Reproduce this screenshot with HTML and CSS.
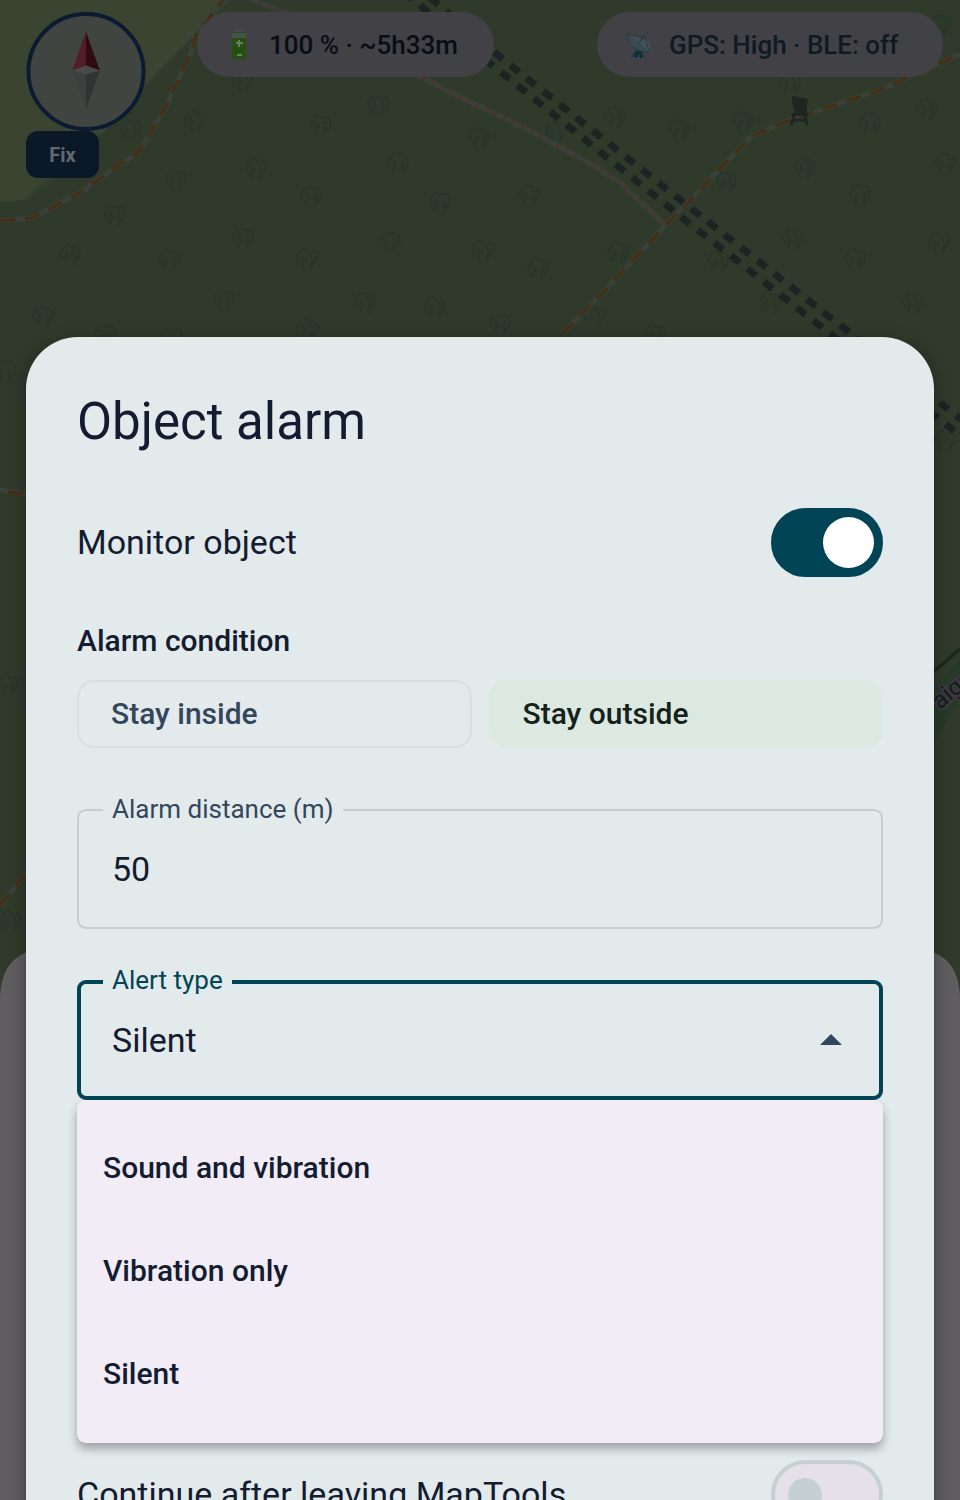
FILE: index.html
```html
<!DOCTYPE html>
<html lang="en">
<head>
    <meta charset="UTF-8">
    <meta name="viewport" content="width=device-width, initial-scale=1.0">
    <title>Object alarm</title>
    <link rel="stylesheet" href="styles.css">
</head>
<body>
    <div class="screen">
        <!-- Map -->
        <svg class="map" viewBox="0 0 960 1500" preserveAspectRatio="xMidYMin slice" aria-hidden="true">
            <defs>
                <g id="tree" fill="none" stroke="#29362c" stroke-width="2">
                    <path d="M-7 4c-4-1-4-7 0-8 0-5 7-6 9-2 5-3 9 2 7 6 2 4-2 6-5 4M-3-2c-3 3 0 6 3 5M3-3c3 2 3 5 0 7M-4 4v7M-7 6l3 3M4 3v9M8 4l-3 5"/>
                </g>
            </defs>
            <rect width="960" height="1500" fill="#2f3a2b"/>
            <path d="M0 0H232L170 60 120 118 50 184 24 201H0z" fill="#323f2e"/>
            <path d="M0 0H228L190 40 147 82 105 130 40 184 24 200 0 202z" fill="#3a4430"/>
            <path d="M960 660C930 690 920 700 900 760V800L960 700z" fill="#273a29"/>

            <g>
                <use href="#tree" x="130" y="128"/><use href="#tree" x="195" y="120"/><use href="#tree" x="321" y="124"/>
                <use href="#tree" x="256" y="167"/><use href="#tree" x="176" y="179"/><use href="#tree" x="311" y="195"/>
                <use href="#tree" x="115" y="214"/><use href="#tree" x="243" y="237"/><use href="#tree" x="70" y="254"/>
                <use href="#tree" x="169" y="259"/><use href="#tree" x="307" y="257"/><use href="#tree" x="224" y="299"/>
                <use href="#tree" x="43" y="315"/><use href="#tree" x="105" y="333"/><use href="#tree" x="172" y="337"/>
                <use href="#tree" x="307" y="328"/><use href="#tree" x="378" y="104"/><use href="#tree" x="398" y="162"/>
                <use href="#tree" x="479" y="136"/><use href="#tree" x="440" y="201"/><use href="#tree" x="529" y="194"/>
                <use href="#tree" x="390" y="241"/><use href="#tree" x="483" y="249"/><use href="#tree" x="538" y="268"/>
                <use href="#tree" x="365" y="302"/><use href="#tree" x="435" y="306"/><use href="#tree" x="500" y="323"/>
                <use href="#tree" x="615" y="116"/><use href="#tree" x="679" y="128"/><use href="#tree" x="743" y="120"/>
                <use href="#tree" x="870" y="122"/><use href="#tree" x="927" y="108"/><use href="#tree" x="556" y="131"/>
                <use href="#tree" x="804" y="167"/><use href="#tree" x="860" y="194"/><use href="#tree" x="945" y="162"/>
                <use href="#tree" x="618" y="252"/><use href="#tree" x="718" y="260"/><use href="#tree" x="793" y="238"/>
                <use href="#tree" x="855" y="258"/><use href="#tree" x="939" y="241"/><use href="#tree" x="770" y="302"/>
                <use href="#tree" x="913" y="302"/><use href="#tree" x="594" y="315"/><use href="#tree" x="655" y="333"/>
                <use href="#tree" x="243" y="80"/><use href="#tree" x="5" y="370"/><use href="#tree" x="8" y="684"/>
                <use href="#tree" x="945" y="440"/><use href="#tree" x="790" y="82"/><use href="#tree" x="940" y="24"/>
                <use href="#tree" x="726" y="180"/><use href="#tree" x="10" y="920"/>
            </g>

            <!-- Paths and tracks -->
            <g fill="none" stroke="#384038" stroke-width="5">
                <path d="M228 -6L214 12 196 36 192 50 165 108 146 140 139 152 118 165 86 189 32 218 0 221"/>
                <path d="M240 -4C350 32 430 84 470 102 540 134 600 168 620 183L665 225"/>
                <path d="M562 334L610 285 662 229 752 136 790 120 880 90 960 54"/>
                <path d="M0 490L26 494M0 906L26 873"/>
            </g>
            <g fill="none" stroke="#452e12" stroke-width="3" stroke-dasharray="15 10">
                <path d="M228 -6L214 12 196 36 192 50 165 108 146 140 139 152 118 165 86 189 32 218 0 221"/>
                <path d="M562 334L610 285 662 229 752 136 790 120 880 90 960 54"/>
                <path d="M8 492L26 494M0 906L26 873"/>
            </g>
            <path d="M240 -4C350 32 430 84 470 102 540 134 600 168 620 183L665 225" fill="none" stroke="#512f30" stroke-width="3" stroke-dasharray="3 7"/>
            <g fill="none" stroke="#1b2422" stroke-width="7" stroke-dasharray="11 10">
                <path d="M404 -8L492 65 680 216 856 354 966 440"/>
                <path d="M414 -16L500 57 688 206 864 344 970 426"/>
            </g>

            <!-- Lookout tower -->
            <g fill="#1d2623">
                <path d="M792 96l16 3-1 5h-15zM793 104h14v8l2 2-1 2h-17l1-3h2z"/>
                <path d="M794 116l-3 9M805 116l2 9M793 120h14" fill="none" stroke="#1d2623" stroke-width="3"/>
            </g>
            <path d="M930 675L960 649" stroke="#182a1a" stroke-width="3"/>
            <text class="road-name" x="940" y="710" transform="rotate(-40 940 710)">aigs</text>
            <path d="M0 1500V1000Q0 948 52 948H908Q960 948 960 1000V1500z" fill="#605d61"/>
        </svg>

        <!-- Status bar -->
        <header class="status">
            <div class="compass-box">
                <svg class="compass" viewBox="0 0 120 120" role="img" aria-label="Compass">
                    <circle cx="60" cy="60" r="58" fill="#414542" stroke="#0c1b31" stroke-width="4"/>
                    <path d="M60 20L46 59 60 54z" fill="#521d24"/>
                    <path d="M60 20L74 59 60 54z" fill="#300b10"/>
                    <path d="M46 59L60 54 74 59 60 63z" fill="#464b49"/>
                    <path d="M46 59L60 63V98z" fill="#3c413f"/>
                    <path d="M74 59L60 63V98z" fill="#303533"/>
                </svg>
                <button type="button" class="fix">Fix</button>
            </div>
            <div class="pill pill-battery">
                <svg class="pill-icon" viewBox="0 0 26 30" aria-hidden="true">
                    <rect x="9" y="0" width="8" height="4" fill="#4a4b50"/>
                    <rect x="6" y="2" width="14" height="27" rx="3" fill="#26500f"/>
                    <path d="M6 3h14v5H6z" fill="#45514a"/>
                    <path d="M13 10v7M10 13h7M11 25h5" fill="none" stroke="#6b7969" stroke-width="2"/>
                </svg>
                <span>100 % · ~5h33m</span>
            </div>
            <div class="pill pill-gps">
                <svg class="pill-icon" viewBox="0 0 26 30" aria-hidden="true">
                    <path d="M1 4C1 14 9 22 23 22z" fill="#394b53" stroke="#243a43" stroke-width="1"/>
                    <path d="M1 4L23 22C27 12 20 8 14 9z" fill="#43525a"/>
                    <path d="M2 4L19 7 23 21M12 13L22 2M12 13l7-6" fill="none" stroke="#263a43" stroke-width="1"/>
                    <path d="M10 20L5 27h14l-4-6z" fill="#183b49"/>
                    <path d="M10 28v-5h5v5" fill="none" stroke="#102c39" stroke-width="2"/>
                </svg>
                <span>GPS: High · BLE: off</span>
            </div>
        </header>

        <!-- Object alarm dialog -->
        <main class="dialog">
            <h1 class="title">Object alarm</h1>

            <div class="row">
                <label for="monitor">Monitor object</label>
                <input type="checkbox" role="switch" id="monitor" class="switch" checked>
            </div>

            <h2 class="subtitle">Alarm condition</h2>
            <div class="chips">
                <button type="button" class="chip" aria-pressed="false">Stay inside</button>
                <button type="button" class="chip chip-selected" aria-pressed="true">Stay outside</button>
            </div>

            <div class="field">
                <label for="distance">Alarm distance (m)</label>
                <input type="text" inputmode="numeric" id="distance" value="50">
            </div>

            <div class="field field-active">
                <label for="alert-type">Alert type</label>
                <select id="alert-type">
                    <option>Sound and vibration</option>
                    <option>Vibration only</option>
                    <option selected>Silent</option>
                </select>
                <svg class="arrow" viewBox="0 0 22 11" aria-hidden="true"><path d="M0 11L11 0 22 11z" fill="#33475c"/></svg>
            </div>
            <div class="menu">
                <button type="button">Sound and vibration</button>
                <button type="button">Vibration only</button>
                <button type="button">Silent</button>
            </div>

            <div class="row">
                <label for="continue">Continue after leaving MapTools</label>
                <input type="checkbox" role="switch" id="continue" class="switch">
            </div>
        </main>
    </div>
</body>
</html>
```
FILE: styles.css
```css
* {
    box-sizing: border-box;
}

body {
    margin: 0;
    font-family: Roboto, "Noto Sans", sans-serif;
    color: #131c30;
    background: #2f3a2b;
}

button,
input,
select {
    font-family: inherit;
    color: inherit;
}

button {
    cursor: pointer;
}

.screen {
    position: relative;
    height: 100vh;
    overflow: hidden;
}

.map {
    position: absolute;
    top: 0;
    left: 0;
    width: 100%;
    height: 100%;
}

.road-name {
    font-size: 24px;
    fill: #161b1b;
    stroke: #3b393e;
    stroke-width: 4px;
    paint-order: stroke;
}

/* Status bar */
.status {
    position: relative;
    display: flex;
    align-items: flex-start;
    height: 337px;
    padding: 12px 17px 0 26px;
}

.compass-box {
    display: flex;
    flex-direction: column;
    align-items: flex-start;
    margin-right: 51px;
}

.compass {
    display: block;
    width: 120px;
    height: 119px;
}

.fix {
    width: 73px;
    height: 47px;
    padding: 0;
    border: none;
    border-radius: 12px;
    background: #0a1828;
    color: #63686e;
    font-size: 20px;
    font-weight: 700;
}

.pill {
    display: flex;
    align-items: center;
    gap: 17px;
    height: 65px;
    padding: 0 26px 0 29px;
    border-radius: 33px;
    background: #424145;
    color: #090d15;
    font-size: 26px;
    font-weight: 500;
}

.pill-battery {
    min-width: 297px;
}

.pill-gps {
    min-width: 346px;
    margin-left: auto;
    color: #101a23;
}

.pill-icon {
    width: 26px;
    height: 30px;
}

/* Dialog */
.dialog {
    position: relative;
    margin: 0 26px;
    padding: 51px;
    border-radius: 52px 52px 0 0;
    background: #e3eaec;
    box-shadow: 0 4px 16px rgba(0, 0, 0, 0.35);
}

.title {
    margin: 0 0 52px;
    font-size: 51px;
    font-weight: 400;
    line-height: 68px;
}

.row {
    display: flex;
    justify-content: space-between;
    align-items: center;
    font-size: 34px;
    line-height: 66px;
}

.row label {
    padding-bottom: 2px;
}

.switch {
    appearance: none;
    display: flex;
    align-items: center;
    width: 112px;
    height: 69px;
    margin: 0;
    padding: 0 13px;
    border: 4px solid #c5d0d3;
    border-radius: 35px;
    background: #e6e0e8;
}

.switch::before {
    content: "";
    width: 34px;
    height: 34px;
    border-radius: 50%;
    background: #c5d0d5;
}

.switch:checked {
    justify-content: flex-end;
    padding: 0 5px;
    border-color: #004455;
    background: #004455;
}

.switch:checked::before {
    width: 51px;
    height: 51px;
    background: #fff;
}

.subtitle {
    margin: 42px 0 18px;
    font-size: 30px;
    font-weight: 500;
    line-height: 43px;
}

.chips {
    display: grid;
    grid-template-columns: 1fr 1fr;
    gap: 17px;
}

.chip {
    height: 68px;
    padding: 0 32px 2px;
    border: 2px solid #d9dfe2;
    border-radius: 17px;
    background: none;
    color: #33475c;
    font-size: 30px;
    font-weight: 500;
    text-align: left;
}

.chip-selected {
    border-color: #dce9e0;
    background: #dce9e0;
    color: #15221b;
}

/* Outlined fields */
.field {
    position: relative;
    margin-top: 61px;
}

.field label {
    position: absolute;
    top: -15px;
    left: 26px;
    padding: 0 9px;
    background: #e3eaec;
    color: #33475c;
    font-size: 26px;
    line-height: 30px;
}

.field input,
.field select {
    appearance: none;
    display: block;
    width: 100%;
    height: 120px;
    padding: 0 33px;
    border: 2px solid #c5ced1;
    border-radius: 9px;
    outline: none;
    background: none;
    font-size: 34px;
}

.field-active {
    margin-top: 51px;
}

.field-active label {
    color: #004455;
}

.field-active select {
    padding: 0 31px;
    border: 4px solid #004455;
}

.arrow {
    position: absolute;
    top: 54px;
    right: 41px;
    width: 22px;
    height: 11px;
}

.menu {
    display: flex;
    flex-direction: column;
    margin-bottom: 17px;
    padding: 17px 0;
    border-radius: 9px;
    background: #f2ecf7;
    box-shadow: 0 6px 10px rgba(0, 0, 0, 0.3);
}

.menu button {
    height: 103px;
    padding: 0 26px 2px;
    border: none;
    background: none;
    font-size: 30px;
    font-weight: 500;
    text-align: left;
}
```
